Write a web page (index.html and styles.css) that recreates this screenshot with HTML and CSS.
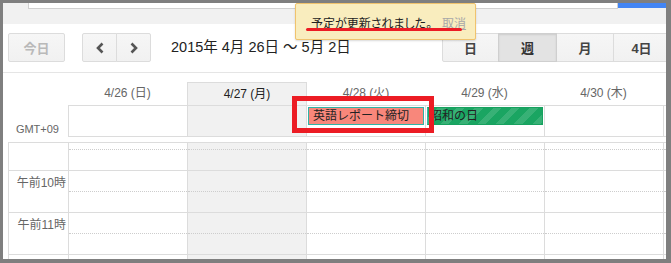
FILE: index.html
```html
<!DOCTYPE html>
<html lang="ja">
<head>
<meta charset="utf-8">
<link rel="stylesheet" href="styles.css">
</head>
<body>
<div class="frame">
  <div class="topbar"><div class="search"></div><div class="blue"></div></div>
  <div class="toolbar">
    <button class="btn today">今日</button>
    <div class="nav">
      <button class="btn"><svg width="10" height="12" viewBox="0 0 10 12"><polyline points="7.5,1.5 3,6 7.5,10.5" fill="none" stroke="#555" stroke-width="2.6"/></svg></button>
      <button class="btn"><svg width="10" height="12" viewBox="0 0 10 12"><polyline points="2.5,1.5 7,6 2.5,10.5" fill="none" stroke="#555" stroke-width="2.6"/></svg></button>
    </div>
    <div class="title">2015年 4月 26日 ～ 5月 2日</div>
    <div class="views">
      <button class="btn v1">日</button>
      <button class="btn v2 sel">週</button>
      <button class="btn v3">月</button>
      <button class="btn v4">4日</button>
    </div>
  </div>
  <div class="week">
    <div class="row dayhead">
      <div class="gut"></div>
      <div class="hcell">4/26 (日)</div>
      <div class="hcell cur">4/27 (月)</div>
      <div class="hcell bl">4/28 (火)</div>
      <div class="hcell">4/29 (水)</div>
      <div class="hcell">4/30 (木)</div>
      <div class="hcell"></div>
    </div>
    <div class="row allday">
      <div class="gut gmt">GMT+09</div>
      <div class="acell"></div>
      <div class="acell cur"></div>
      <div class="acell"><div class="ev red">英語レポート締切</div></div>
      <div class="acell"><div class="ev green">昭和の日</div></div>
      <div class="acell"></div>
      <div class="acell"></div>
    </div>
    <div class="timegrid">
      <div class="tgut">
        <div class="gslot first"></div>
        <div class="gslot"><span class="lbl">午前10時</span></div>
        <div class="gslot"><span class="lbl">午前11時</span></div>
        <div class="gslot"><span class="lbl">午後12時</span></div>
      </div>
      <div class="dcol">
        <div class="s dot first"></div><div class="s sol"></div><div class="s dot"></div><div class="s sol"></div><div class="s dot"></div><div class="s sol"></div>
      </div>
      <div class="dcol cur">
        <div class="s dot first"></div><div class="s sol"></div><div class="s dot"></div><div class="s sol"></div><div class="s dot"></div><div class="s sol"></div>
      </div>
      <div class="dcol">
        <div class="s dot first"></div><div class="s sol"></div><div class="s dot"></div><div class="s sol"></div><div class="s dot"></div><div class="s sol"></div>
      </div>
      <div class="dcol">
        <div class="s dot first"></div><div class="s sol"></div><div class="s dot"></div><div class="s sol"></div><div class="s dot"></div><div class="s sol"></div>
      </div>
      <div class="dcol">
        <div class="s dot first"></div><div class="s sol"></div><div class="s dot"></div><div class="s sol"></div><div class="s dot"></div><div class="s sol"></div>
      </div>
      <div class="dcol">
        <div class="s dot first"></div><div class="s sol"></div><div class="s dot"></div><div class="s sol"></div><div class="s dot"></div><div class="s sol"></div>
      </div>
    </div>
  </div>
  <div class="toast"><span class="msg">予定が更新されました。</span><span class="undo">取消</span></div>
  <div class="mark-line"></div>
  <div class="mark-box"></div>
</div>
</body>
</html>
```

FILE: styles.css
```css
* { box-sizing: border-box; }
html, body { margin: 0; padding: 0; background: #fff; }
body { font-family: "Liberation Sans", "Noto Sans CJK JP", sans-serif; }

.frame {
  position: relative;
  width: 671px;
  height: 263px;
  border-style: solid;
  border-color: #7f7f7f;
  border-width: 3px 5px 4px 3px;
  overflow: hidden;
  background: #fff;
}

.topbar { height: 21px; background: #f1f1f1; display: flex; align-items: flex-start; }
.search { margin-left: 25px; width: 590px; height: 6px; background: #fff; border: 1px solid #d0d0d0; border-top: 0; }
.blue { width: 48px; height: 5px; background: #4285f4; }

.toolbar {
  height: 49px;
  border-bottom: 1px solid #e5e5e5;
  display: flex;
  align-items: flex-start;
  padding: 9px 0 0 5px;
}
.btn {
  height: 29px;
  border: 1px solid #dcdcdc;
  background: linear-gradient(#f6f6f6, #f1f1f1);
  border-radius: 2px;
  font-family: "Liberation Sans", "Noto Sans CJK JP", sans-serif;
  font-size: 13px;
  font-weight: bold;
  color: #444;
  display: flex;
  align-items: center;
  justify-content: center;
  padding: 0;
  flex-shrink: 0;
}
.today { width: 57px; color: #b9b9b9; }
.nav { margin-left: 17px; display: flex; }
.nav .btn { width: 35px; }
.nav .btn:first-child { border-radius: 2px 0 0 2px; }
.nav .btn + .btn { margin-left: -1px; border-radius: 0 2px 2px 0; }
.title {
  flex: 1;
  margin-left: 20px;
  font-size: 14.5px;
  line-height: 29px;
  color: #222;
  white-space: nowrap;
}
.views { display: flex; flex-shrink: 0; margin-right: -4px; }
.views .btn { border-radius: 0; }
.views .btn + .btn { margin-left: -1px; }
.views .v1 { width: 57px; border-radius: 2px 0 0 2px; }
.views .v2 { width: 59px; }
.views .v3 { width: 58px; }
.views .v4 { width: 57px; }
.views .sel {
  background: #e3e3e3;
  border-color: #cfcfcf;
  box-shadow: inset 0 1px 2px rgba(0,0,0,0.1);
  color: #333;
  position: relative;
}

.week { padding-top: 9px; }
.row { display: grid; grid-template-columns: 65px repeat(5, 119px) 1fr; }

.dayhead .hcell {
  height: 23px;
  line-height: 23px;
  text-align: center;
  font-size: 12px;
  color: #666;
  white-space: nowrap;
}
.dayhead .hcell.cur {
  background: #f1f1f1;
  border-left: 1px solid #dcdcdc;
  border-top: 1px solid #dcdcdc;
  line-height: 22px;
  color: #222;
}
.dayhead .hcell.bl { border-left: 1px solid #dcdcdc; }

.allday .acell {
  height: 32px;
  border-top: 1px solid #dcdcdc;
  border-bottom: 1px solid #dcdcdc;
  border-left: 1px solid #dcdcdc;
}
.allday .acell.cur { background: #f1f1f1; }
.gmt {
  align-self: end;
  text-align: right;
  padding-right: 9px;
  padding-bottom: 1px;
  font-size: 11px;
  line-height: 13px;
  color: #666;
}

.ev {
  margin: 1px 1px 0 1px;
  height: 18px;
  font-size: 12px;
  line-height: 16px;
  color: #222;
  white-space: nowrap;
  overflow: hidden;
}
.ev.red { background: #f8877b; border: 1px solid #2fb3a6; padding-left: 4px; }
.ev.green {
  background: #1aa562 repeating-linear-gradient(135deg, rgba(255,255,255,0) 0 7px, rgba(255,255,255,0.13) 7px 13px);
  border: 1px solid #17a15f;
  border-left-color: #2fb3a6;
  padding-left: 2px;
}

.timegrid {
  margin-top: 5px;
  margin-left: 5px;
  border-left: 1px solid #dcdcdc;
  border-top: 1px solid #dcdcdc;
  display: grid;
  grid-template-columns: 59px repeat(5, 119px) 1fr;
}
.gslot { height: 42px; border-bottom: 1px solid #dcdcdc; text-align: right; padding: 2px 2px 0 0; }
.gslot.first { height: 28px; }
.lbl { font-size: 12px; line-height: 14px; color: #666; white-space: nowrap; }

.dcol { border-left: 1px solid #dcdcdc; height: 140px; }
.dcol.cur { background: #f1f1f1; }
.s { height: 21px; }
.s.first { height: 7px; }
.s.dot { border-bottom: 1px dotted #cdcdcd; }
.s.sol { border-bottom: 1px solid #dcdcdc; }

.toast {
  position: absolute;
  left: 292px;
  top: 0;
  width: 181px;
  height: 37px;
  background: #f9edbe;
  border: 1px solid #f0c36d;
  border-radius: 2px;
  box-shadow: 0 1px 2px rgba(0,0,0,0.15);
  display: flex;
  align-items: center;
  padding: 1px 0 0 15px;
  font-size: 12px;
  white-space: nowrap;
}
.toast .msg { color: #222; font-feature-settings: "palt"; }
.toast .undo { margin-left: 10px; color: #a8a8a8; text-decoration: underline; }

.mark-line {
  position: absolute;
  left: 303px;
  top: 25px;
  width: 156px;
  height: 3px;
  border-radius: 2px;
  background: #ec1c24;
}
.mark-box {
  position: absolute;
  left: 289px;
  top: 93px;
  width: 142px;
  height: 37px;
  border: 5px solid #ec1c24;
}
```
